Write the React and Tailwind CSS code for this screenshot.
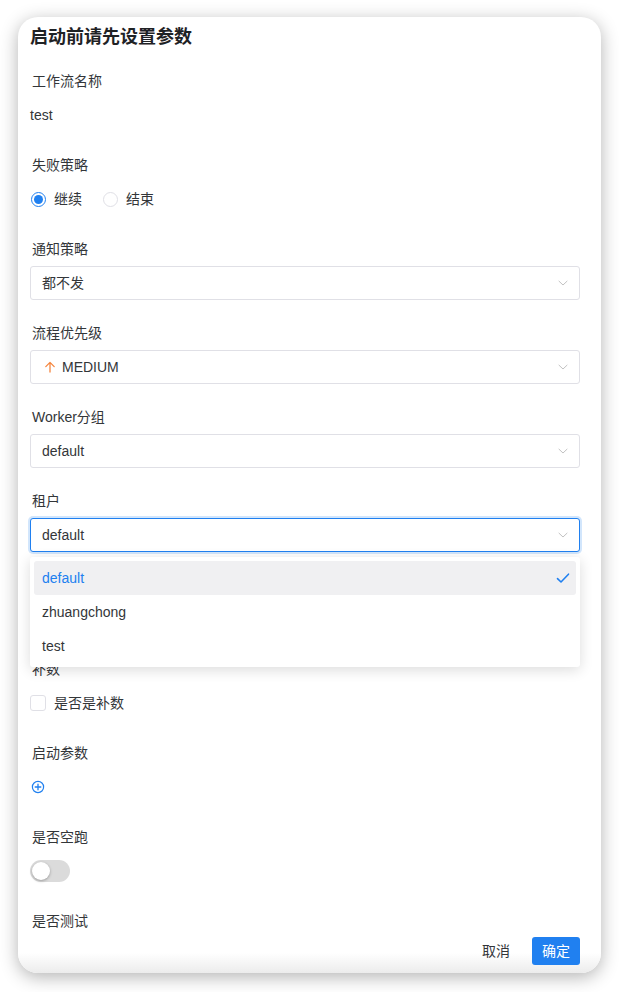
const FONT = { fontFamily: '"Liberation Sans", "Noto Sans CJK SC", sans-serif' }

function Chevron() {
  return (
    <svg width="12" height="12" viewBox="0 0 12 12" fill="none" className="shrink-0">
      <path d="M2 4.2 L6 8 L10 4.2" stroke="#c2c2c2" strokeWidth="1" strokeLinecap="round" strokeLinejoin="round" />
    </svg>
  )
}

function Select({ children, focused }) {
  return (
    <div
      className={
        focused
          ? 'h-[34px] w-full rounded-[3px] border border-[#2080f0] shadow-[0_0_0_2px_rgba(32,128,240,0.2)] flex items-center justify-between pl-[11px] pr-[10px] bg-white'
          : 'h-[34px] w-full rounded-[3px] border border-[#e0e0e6] flex items-center justify-between pl-[11px] pr-[10px] bg-white'
      }
    >
      <div className="flex items-center gap-[6px] text-[14px] text-[#333639]">{children}</div>
      <Chevron />
    </div>
  )
}

function Item({ label, children }) {
  return (
    <div className="mb-[22px]">
      <div className="h-[22px] flex items-center pl-[2px] text-[14px] text-[#333639]">{label}</div>
      <div className="mt-[6px] h-[34px] flex items-center relative">{children}</div>
    </div>
  )
}

function Radio({ checked, label }) {
  return (
    <div className="flex items-center gap-[8px] mr-[21px]">
      <span
        className={
          checked
            ? 'w-[15px] h-[15px] rounded-full border border-[#2080f0] flex items-center justify-center'
            : 'w-[15px] h-[15px] rounded-full border border-[#e0e0e6]'
        }
      >
        {checked && <span className="w-[9px] h-[9px] rounded-full bg-[#2080f0]" />}
      </span>
      <span className="text-[14px] text-[#333639]">{label}</span>
    </div>
  )
}

export default function App() {
  return (
    <div className="w-[619px] h-[992px] bg-white pt-[17px] pl-[18px]" style={FONT}>
      <div className="w-[583px] h-[956px] rounded-[20px] bg-white shadow-[0_4px_18px_rgba(0,0,0,0.3)] overflow-hidden flex flex-col">
        <div className="flex-1 min-h-0 overflow-hidden pl-[12px] pr-[21px]">
          <h1 className="pt-[8px] h-[32px] text-[18px] leading-[24px] font-bold text-[#1f2225]">启动前请先设置参数</h1>
          <div className="mt-[21px]">
            <Item label="工作流名称">
              <span className="text-[14px] text-[#333639]">test</span>
            </Item>
            <Item label="失败策略">
              <div className="flex items-center pl-[1px]">
                <Radio checked label="继续" />
                <Radio label="结束" />
              </div>
            </Item>
            <Item label="通知策略">
              <Select>都不发</Select>
            </Item>
            <Item label="流程优先级">
              <Select>
                <svg width="12" height="12" viewBox="0 0 12 12" fill="none" className="ml-[2px]">
                  <path d="M6 11 V1.5 M1.8 5.6 L6 1.4 L10.2 5.6" stroke="#f5863f" strokeWidth="1.3" strokeLinecap="round" strokeLinejoin="round" />
                </svg>
                <span>MEDIUM</span>
              </Select>
            </Item>
            <Item label="Worker分组">
              <Select>default</Select>
            </Item>
            <Item label="租户">
              <Select focused>default</Select>
              <div className="absolute left-0 right-0 top-[39px] z-10 rounded-[3px] bg-white shadow-[0_3px_14px_rgba(0,0,0,0.14)] p-[4px]">
                <div className="h-[34px] rounded-[3px] bg-[#f0f0f2] flex items-center justify-between pl-[8px] pr-[6px]">
                  <span className="text-[14px] text-[#2080f0]">default</span>
                  <svg width="14" height="14" viewBox="0 0 14 14" fill="none">
                    <path d="M1.5 7.6 L5 11 L12.5 3.2" stroke="#2080f0" strokeWidth="1.6" strokeLinecap="round" strokeLinejoin="round" />
                  </svg>
                </div>
                <div className="h-[34px] flex items-center pl-[8px] text-[14px] text-[#333639]">zhuangchong</div>
                <div className="h-[34px] flex items-center pl-[8px] text-[14px] text-[#333639]">test</div>
              </div>
            </Item>
            {/* item hidden under the open menu */}
            <div className="mb-[22px] h-[62px]" />
            <Item label="补数">
              <div className="flex items-center gap-[8px]">
                <span className="w-[16px] h-[16px] rounded-[3px] border border-[#e0e0e6]" />
                <span className="text-[14px] text-[#333639]">是否是补数</span>
              </div>
            </Item>
            <Item label="启动参数">
              <svg width="14" height="14" viewBox="0 0 14 14" fill="none" className="ml-[1px]">
                <circle cx="7" cy="7" r="5.6" stroke="#2080f0" strokeWidth="1.2" />
                <path d="M7 4.2 V9.8 M4.2 7 H9.8" stroke="#2080f0" strokeWidth="1.3" strokeLinecap="round" />
              </svg>
            </Item>
            <Item label="是否空跑">
              <div className="w-[40px] h-[22px] rounded-full bg-[#dbdbdb] flex items-center pl-[2px]">
                <span className="w-[18px] h-[18px] rounded-full bg-white shadow-[0_1px_3px_rgba(0,0,0,0.3)]" />
              </div>
            </Item>
            <Item label="是否测试">
              <div className="w-[40px] h-[22px] rounded-full bg-[#dbdbdb]" />
            </Item>
          </div>
        </div>
        <div className="h-[40px] shrink-0 flex items-start justify-end gap-[8px] pt-[4px] pr-[21px] bg-gradient-to-b from-white via-white to-[#ececec]">
          <button className="h-[28px] px-[14px] text-[14px] text-[#333639]">取消</button>
          <button className="h-[28px] w-[48px] rounded-[3px] bg-[#2080f0] text-[14px] text-white">确定</button>
        </div>
      </div>
    </div>
  )
}
